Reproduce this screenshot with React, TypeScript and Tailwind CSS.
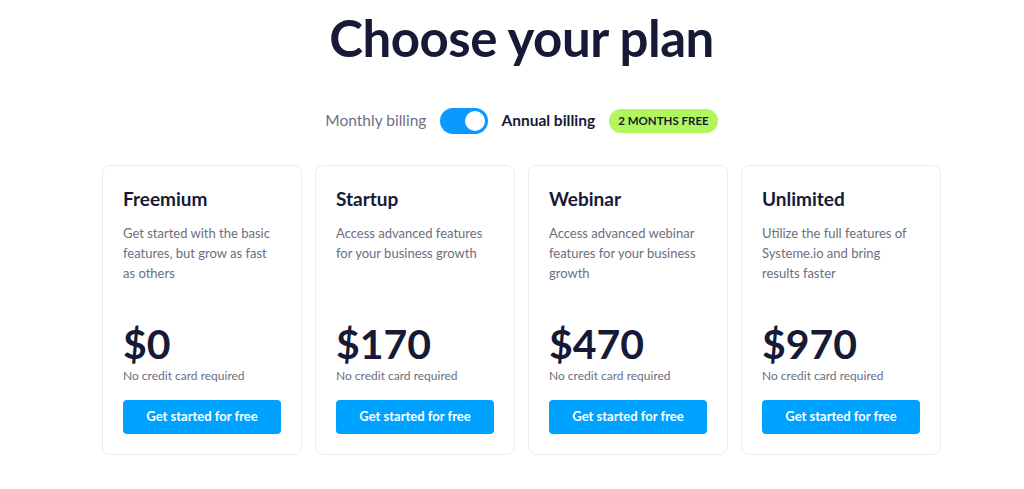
import * as React from "react"

const plans = [
  {
    name: "Freemium",
    desc: "Get started with the basic features, but grow as fast as others",
    price: "$0",
  },
  {
    name: "Startup",
    desc: "Access advanced features for your business growth",
    price: "$170",
  },
  {
    name: "Webinar",
    desc: "Access advanced webinar features for your business growth",
    price: "$470",
  },
  {
    name: "Unlimited",
    desc: "Utilize the full features of Systeme.io and bring results faster",
    price: "$970",
  },
]

function PlanCard({ name, desc, price }: { name: string; desc: string; price: string }) {
  return (
    <div className="flex h-[290px] w-[200px] flex-col rounded-lg border border-[#ececf0] bg-white px-5 pt-[21px] pb-5">
      <h3 className="text-[19px] font-bold leading-6 text-[#161a36]">{name}</h3>
      <p className="mt-[12px] text-[13px] leading-5 text-[#6b6e82]">{desc}</p>
      <div className="mt-auto">
        <div className="text-[41px] font-bold leading-[44px] text-[#161a36]">{price}</div>
        <div className="mt-[2px] text-[12px] leading-4 text-[#6b6e82]">No credit card required</div>
        <button className="mt-[16px] flex h-[34px] w-full items-center justify-center rounded-[4px] bg-[#00a2ff] text-[13px] font-bold text-white">
          Get started for free
        </button>
      </div>
    </div>
  )
}

export default function App() {
  return (
    <div className="flex h-[489px] w-full flex-col items-center bg-white pl-[19px] font-['Lato',sans-serif]">
      <h1 className="mt-[8px] text-[51px] font-bold leading-[60px] tracking-[-0.5px] text-[#161a36]">
        Choose your plan
      </h1>
      <div className="mt-[40px] flex items-center">
        <span className="text-[15.5px] text-[#6f7186]">Monthly billing</span>
        <div className="ml-[14px] flex h-[26px] w-[48px] items-center justify-end rounded-full bg-[#0b99ff] pr-[3px]">
          <div className="h-[20px] w-[20px] rounded-full bg-white" />
        </div>
        <span className="ml-[13px] text-[15.5px] font-bold text-[#161a36]">Annual billing</span>
        <span className="ml-[14px] flex h-[24px] items-center rounded-full bg-[#b2f65d] px-[9px] text-[11.5px] font-bold text-[#161a36]">
          2 MONTHS FREE
        </span>
      </div>
      <div className="mt-[31px] flex gap-[13px]">
        {plans.map((p) => (
          <PlanCard key={p.name} {...p} />
        ))}
      </div>
    </div>
  )
}
